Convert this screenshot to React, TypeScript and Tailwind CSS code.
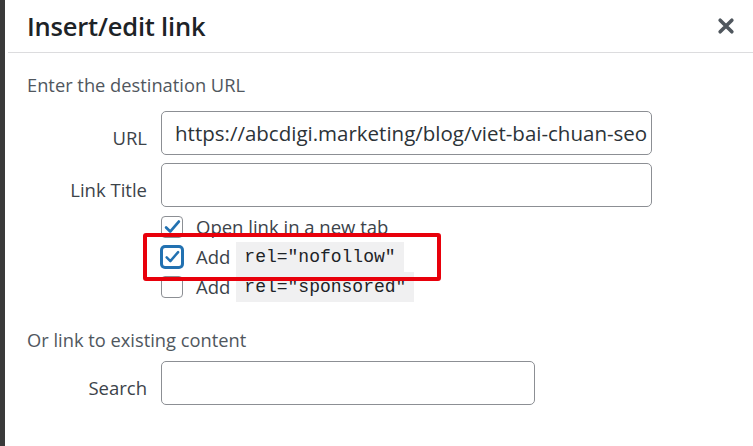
import React from 'react';

const font = { fontFamily: '"Open Sans", "Noto Sans", Arial, sans-serif' };

function Check() {
  return (
    <svg viewBox="0 0 22 22" className="absolute inset-0 h-full w-full overflow-visible">
      <path d="M4.5 11.5 L9 16 L18.5 5" fill="none" stroke="#2271b1" strokeWidth="3" strokeLinecap="round" strokeLinejoin="round" />
    </svg>
  );
}

function Box({ checked, focused }: { checked?: boolean; focused?: boolean }) {
  return (
    <span
      className={
        'relative box-border block h-[22px] w-[22px] shrink-0 rounded-[4px] bg-white ' +
        (focused ? 'border-2 border-[#2271b1] shadow-[0_0_0_1px_#2271b1]' : 'border border-[#8c8f94]')
      }
    >
      {checked && <Check />}
    </span>
  );
}

function Code({ children }: { children: React.ReactNode }) {
  return (
    <code className="flex h-[30px] items-center bg-[#f0f0f1] px-[8px] text-[18px] text-[#1d2327]" style={{ fontFamily: '"Liberation Mono", "DejaVu Sans Mono", monospace' }}>
      {children}
    </code>
  );
}

export default function App() {
  return (
    <div className="flex h-[446px] w-[753px] overflow-hidden bg-white" style={font}>
      <div className="w-[5px] shrink-0 bg-[#3a3a3a]" />
      <div className="flex min-w-0 flex-1 flex-col pl-[3px]">
        <div className="flex h-[53px] items-center justify-between border-b border-[#dcdcde] pl-[19px] pr-[18px]">
          <h1 className="text-[25.5px] font-semibold tracking-[-0.2px] text-[#1d2327]">Insert/edit link</h1>
          <svg viewBox="0 0 20 20" className="h-[18px] w-[18px]">
            <path d="M3.5 3.5 L16.5 16.5 M16.5 3.5 L3.5 16.5" stroke="#50575e" strokeWidth="4" strokeLinecap="round" />
          </svg>
        </div>

        <div className="pl-[19px] pt-[20px]">
          <p className="h-[24px] text-[18.3px] leading-[24px] text-[#50575e]">Enter the destination URL</p>

          <div className="mt-[14px] flex flex-col gap-[8px]">
            <div className="flex items-center">
              <label className="w-[120px] pt-[10px] text-right text-[18.5px] text-[#3c434a]">URL</label>
              <div className="ml-[14px] flex h-[44px] w-[491px] items-center overflow-hidden rounded-[5px] border border-[#8c8f94] pl-[13px] text-[20.5px] whitespace-nowrap text-[#2c3338]">
                https://abcdigi.marketing/blog/viet-bai-chuan-seo
              </div>
            </div>
            <div className="flex items-center">
              <label className="w-[120px] pt-[10px] text-right text-[18.5px] text-[#3c434a]">Link Title</label>
              <div className="ml-[14px] h-[44px] w-[491px] rounded-[5px] border border-[#8c8f94]" />
            </div>
          </div>

          <div className="relative mt-[5px] flex flex-col pl-[134px] text-[18.5px] text-[#3c434a]">
            <div className="flex h-[30px] items-center gap-[13px]">
              <Box checked />
              <span>Open link in a new tab</span>
            </div>
            <div className="flex h-[30px] items-center gap-[13px]">
              <Box checked focused />
              <span className="flex items-center gap-[6px]">
                Add <Code>rel="nofollow"</Code>
              </span>
            </div>
            <div className="flex h-[30px] items-center gap-[13px]">
              <Box />
              <span className="flex items-center gap-[6px]">
                Add <Code>rel="sponsored"</Code>
              </span>
            </div>
            <div className="absolute left-[116px] top-[21px] h-[48px] w-[298px] rounded-[3px] border-[4px] border-[#e8000b]" />
          </div>

          <p className="mt-[26px] h-[24px] text-[18.3px] leading-[24px] text-[#50575e]">Or link to existing content</p>

          <div className="mt-[9px] flex items-center">
            <label className="w-[120px] pt-[10px] text-right text-[18.5px] text-[#3c434a]">Search</label>
            <div className="ml-[14px] h-[44px] w-[374px] rounded-[5px] border border-[#8c8f94]" />
          </div>
        </div>
      </div>
    </div>
  );
}
